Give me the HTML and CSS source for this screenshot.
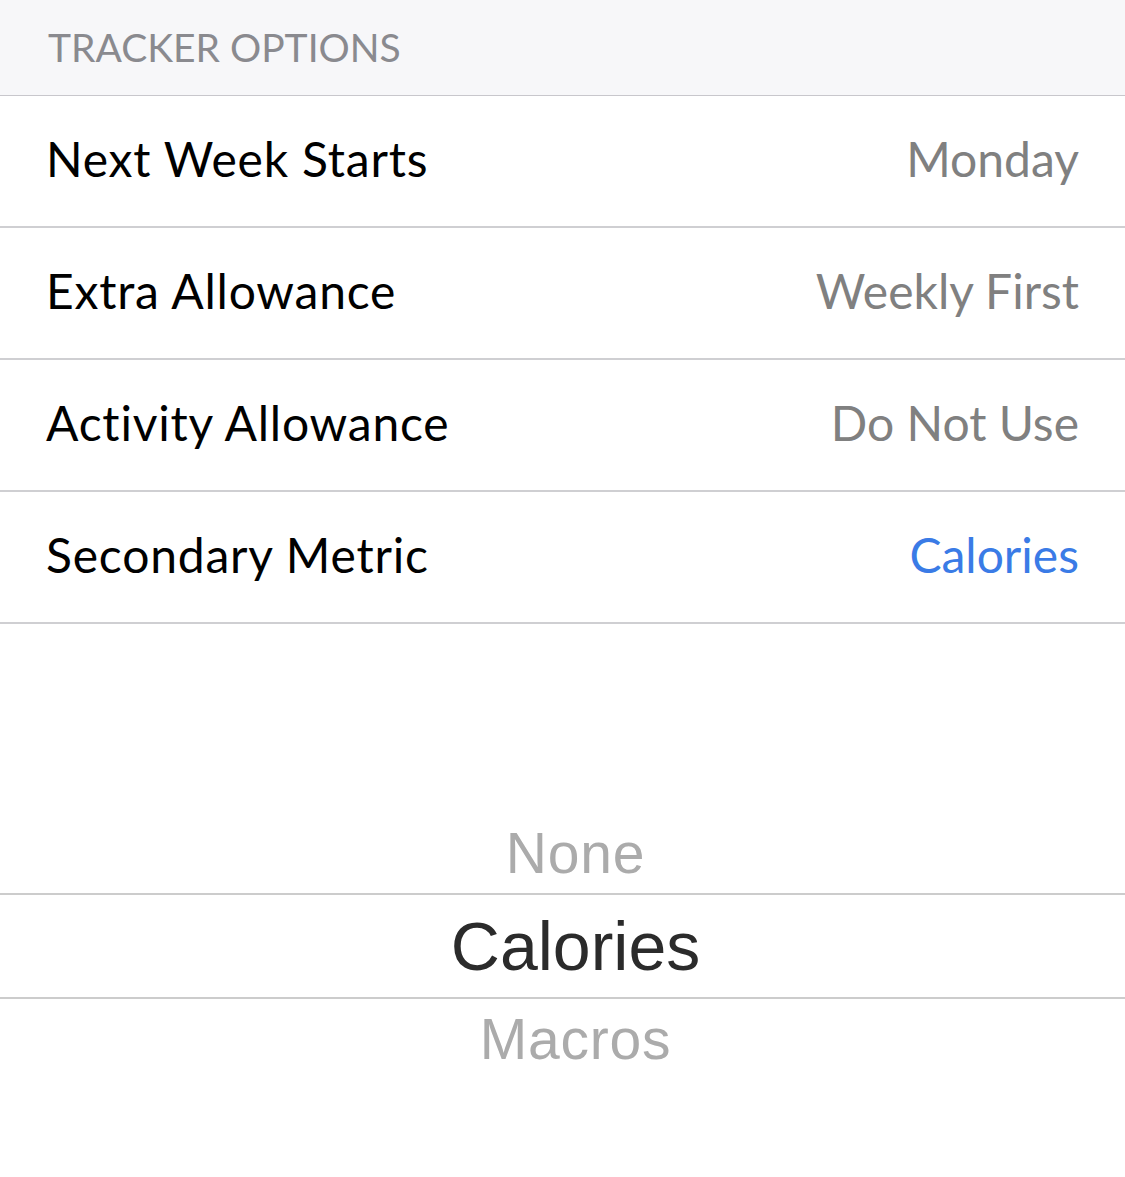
FILE: index.html
```html
<!DOCTYPE html>
<html lang="en">
<head>
    <meta charset="UTF-8">
    <meta name="viewport" content="width=device-width, initial-scale=1.0">
    <title>Tracker Options</title>
    <link rel="stylesheet" href="styles.css">
</head>
<body>
    <div class="section-header">TRACKER OPTIONS</div>
    <div class="options">
        <div class="row">
            <span class="label">Next Week Starts</span>
            <span class="value">Monday</span>
        </div>
        <div class="row">
            <span class="label">Extra Allowance</span>
            <span class="value">Weekly First</span>
        </div>
        <div class="row">
            <span class="label">Activity Allowance</span>
            <span class="value">Do Not Use</span>
        </div>
        <div class="row">
            <span class="label">Secondary Metric</span>
            <span class="value active">Calories</span>
        </div>
    </div>
    <div class="picker">
        <div class="pick-item before">None</div>
        <div class="pick-item selected">Calories</div>
        <div class="pick-item after">Macros</div>
    </div>
</body>
</html>
```

FILE: styles.css
```css
body {
    margin: 0;
    background-color: #ffffff;
    font-family: Lato, "Noto Sans", sans-serif;
}
.section-header {
    height: 95px;
    line-height: 95px;
    padding-left: 48px;
    background-color: #f7f7f9;
    border-bottom: 1px solid #c8c7cc;
    color: #8a8a8f;
    font-size: 39px;
}
.row {
    box-sizing: border-box;
    display: flex;
    justify-content: space-between;
    align-items: center;
    height: 132px;
    padding: 0 46px 5px 46px;
    border-bottom: 2px solid #cfcfd2;
}
.label {
    font-size: 48px;
    letter-spacing: 0.8px;
    color: #000000;
}
.value {
    font-size: 48px;
    color: #808080;
}
.value.active {
    color: #3a7be6;
}
.picker {
    margin-top: 191px;
    font-family: "Liberation Sans", Arial, sans-serif;
    text-align: center;
}
.pick-item {
    padding-left: 26px;
    color: #ababab;
    font-size: 57px;
    letter-spacing: 0.8px;
}
.before {
    height: 78px;
    line-height: 76px;
}
.selected {
    height: 102px;
    line-height: 102px;
    border-top: 2px solid #cccccc;
    border-bottom: 2px solid #cccccc;
    color: #2b2b2b;
    font-size: 68px;
    letter-spacing: 0;
}
.after {
    height: 86px;
    line-height: 80px;
}
```
